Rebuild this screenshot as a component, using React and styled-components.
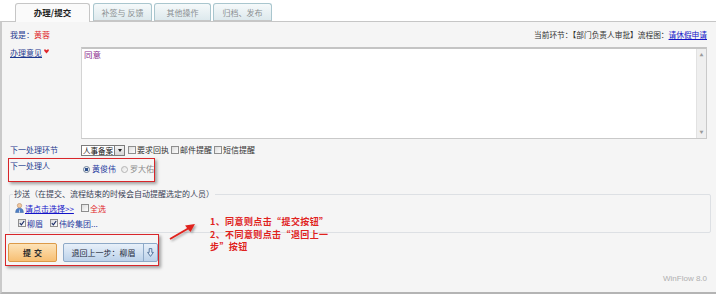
import React from "react";
import styled, { createGlobalStyle } from "styled-components";

const GlobalStyle = createGlobalStyle`
  html, body {
    margin: 0;
    padding: 0;
    background: #fff;
  }
  body {
    font-family: "Noto Sans CJK SC", "Liberation Sans", sans-serif;
    font-size: 8px;
    color: #333;
  }
  * {
    box-sizing: border-box;
  }
`;

const Page = styled.div`
  width: 716px;
  height: 294px;
  overflow: hidden;
`;

const TabBar = styled.div`
  display: flex;
  align-items: flex-end;
  height: 21px;
  padding-left: 15px;
  position: relative;
  z-index: 1;
`;

const Tab = styled.div`
  width: ${(p) => p.$w}px;
  margin-right: ${(p) => p.$gap || 0}px;
  height: ${(p) => (p.$active ? 19 : 18)}px;
  margin-bottom: ${(p) => (p.$active ? -1 : 0)}px;
  display: flex;
  align-items: center;
  justify-content: center;
  border: 1px solid ${(p) => (p.$active ? "#c6c6c6" : "#a9c6ce")};
  border-bottom: ${(p) => (p.$active ? "none" : "1px solid #c6c6c6")};
  border-radius: 3px 3px 0 0;
  background: ${(p) =>
    p.$active ? "#fafafa" : "linear-gradient(#f5f9fa, #dde9ed)"};
  color: ${(p) => (p.$active ? "#222" : "#8a8f92")};
  font-size: ${(p) => (p.$active ? 8.5 : 8)}px;
  font-weight: ${(p) => (p.$active ? 700 : 400)};
  padding-bottom: ${(p) => (p.$active ? 2 : 0)}px;
`;

const Panel = styled.div`
  height: 273px;
  border-top: 1px solid #c6c6c6;
  border-left: 2px solid #cacaca;
  border-bottom: 2px solid #b4b4b4;
  background: #f5f5f5;
  display: flex;
  flex-direction: column;
`;

const Header = styled.div`
  display: flex;
  justify-content: space-between;
  padding: 7px 9px 0 8px;
  line-height: 12px;
`;

const Me = styled.span`
  color: #1f3a8f;
  b {
    font-weight: 400;
    color: #e0262a;
  }
`;

const Info = styled.span`
  color: #333;
  font-size: 7.7px;
`;

const Link = styled.a`
  color: ${(p) => p.$color || "#1414c8"};
  text-decoration: underline;
  cursor: pointer;
`;

const FormRow = styled.div`
  display: grid;
  grid-template-columns: 71px 1fr;
  margin: ${(p) => p.$top}px 9px 0 8px;
  height: ${(p) => p.$h}px;
  line-height: 12px;
`;

const Label = styled.span`
  color: #1f3a8f;
  white-space: nowrap;
`;

const Required = styled.svg`
  margin-left: 2px;
  vertical-align: 2px;
`;

const TextBox = styled.div`
  display: flex;
  background: #fff;
  border: 1px solid #c9c9c9;
  border-top: 2px solid #c4c4c4;
  border-left-color: #d4d4d4;
`;

const TextContent = styled.div`
  flex: 1;
  padding: 0 2px;
  color: #8b2c8c;
  font-size: 8.5px;
  line-height: 11px;
`;

const ScrollTrack = styled.div`
  width: 10px;
  background: #efefef;
  border-left: 1px solid #e2e2e2;
  display: flex;
  flex-direction: column;
  justify-content: space-between;
  align-items: center;
  padding: 4px 0 3px;
  color: #9a9a9a;
  font-size: 4px;
  line-height: 5px;
`;

const Controls = styled.div`
  display: flex;
  align-items: center;
  height: 12px;
`;

const Select = styled.div`
  display: flex;
  align-items: stretch;
  height: 11px;
  width: 44px;
  border: 1px solid #7c7c7c;
  background: #fff;
  margin-right: 3px;
  color: #111;
  line-height: 9px;
  span {
    flex: 1;
    padding-left: 1px;
    font-size: 7.5px;
    white-space: nowrap;
    overflow: hidden;
  }
`;

const SelectBtn = styled.div`
  width: 10px;
  flex: none;
  border-left: 1px solid #7c7c7c;
  background: linear-gradient(#f4f4f4, #d6d6d6);
  display: flex;
  align-items: center;
  justify-content: center;
  &::after {
    content: "";
    border: 2.5px solid transparent;
    border-top: 3px solid #222;
    margin-top: 3px;
  }
`;

const Option = styled.label`
  display: inline-flex;
  align-items: center;
  margin-right: ${(p) => p.$gap ?? 2}px;
  color: ${(p) => p.$color || "#333"};
  white-space: nowrap;
`;

const Box = styled.span`
  width: 8px;
  height: 8px;
  border: 1px solid #8e8e8e;
  background: linear-gradient(135deg, #dcdcdc, #fdfdfd);
  margin-right: 1px;
  display: inline-flex;
  align-items: center;
  justify-content: center;
`;

const Radio = styled.span`
  width: 7px;
  height: 7px;
  border-radius: 50%;
  border: 1px solid ${(p) => (p.$on ? "#6f7f95" : "#b4b4b4")};
  background: ${(p) =>
    p.$on
      ? "radial-gradient(circle, #2c4f8c 0 1.5px, #e9eef5 2px)"
      : "linear-gradient(135deg, #e2e2e2, #fbfbfb)"};
  margin-right: 2px;
`;

const Callout = styled.div`
  border: 1px solid #d8262a;
  box-shadow: 2px 2px 3px rgba(0, 0, 0, 0.35);
  margin: ${(p) => p.$m};
  width: ${(p) => p.$w}px;
  height: ${(p) => p.$h}px;
`;

const HandlerRow = styled.div`
  display: grid;
  grid-template-columns: 73px 1fr;
  padding: 1px 0 0 1px;
  line-height: 12px;
`;

const Radios = styled.div`
  display: flex;
  align-items: center;
  padding-top: 3px;
`;

const CopySet = styled.fieldset`
  margin: 7px 5px 0 7px;
  padding: 0 5px 3px 5px;
  border: 1px solid #dde0e4;
  border-radius: 2px;
  min-width: 0;
`;

const Legend = styled.legend`
  padding: 0 1px;
  margin-left: -2px;
  color: #3a4256;
  line-height: 10px;
`;

const CopyRow = styled.div`
  display: flex;
  align-items: center;
  height: 12px;
  margin-top: 3px;
  padding-left: ${(p) => p.$pl || 0}px;
`;

const ActionRow = styled.div`
  position: relative;
  margin-top: 1px;
  padding-left: 3px;
`;

const Buttons = styled.div`
  display: flex;
  gap: 6px;
  padding: 8px 0 0 2px;
`;

const SubmitBtn = styled.button`
  width: 49px;
  height: 19px;
  border: 1px solid #dc9a48;
  border-radius: 2px;
  background: linear-gradient(#fde3b8, #f7bf73);
  font-family: inherit;
  font-size: 8px;
  font-weight: 700;
  color: #2c2c2c;
  letter-spacing: 3px;
  padding: 0 0 0 3px;
`;

const BackGroup = styled.div`
  display: flex;
  height: 19px;
  border: 1px solid #8ea9c7;
  border-radius: 2px;
  background: linear-gradient(#e8f0f9, #bcd2ea);
`;

const BackBtn = styled.button`
  width: 79px;
  border: none;
  background: none;
  font-family: inherit;
  font-size: 8px;
  color: #1e2a3c;
  padding: 0;
`;

const DropBtn = styled.button`
  width: 14px;
  border: none;
  border-left: 1px solid #8ea9c7;
  background: none;
  padding: 0;
  display: flex;
  align-items: center;
  justify-content: center;
`;

const Note = styled.div`
  position: absolute;
  left: 164px;
  top: -18px;
  display: flex;
  align-items: flex-start;
`;

const NoteText = styled.div`
  margin-left: 10px;
  color: #e0221d;
  font-weight: 700;
  font-size: 9px;
  letter-spacing: 0.4px;
  line-height: 12.5px;
  white-space: nowrap;
`;

const Footer = styled.div`
  margin-top: auto;
  padding: 0 9px 8px 0;
  text-align: right;
  font-family: "Liberation Sans", Arial, sans-serif;
  font-size: 8px;
  line-height: 10px;
  color: #b0b0b0;
`;

const Check = ({ on }) => (
  <Box>
    {on && (
      <svg width="6" height="6" viewBox="0 0 6 6">
        <path d="M0.8 3.2 L2.4 4.8 L5.2 1" fill="none" stroke="#1d2f6a" strokeWidth="1.2" />
      </svg>
    )}
  </Box>
);

const UserIcon = () => (
  <svg width="9" height="10" viewBox="0 0 9 10" style={{ marginRight: 1 }}>
    <circle cx="4.5" cy="2.6" r="2.2" fill="#f1c9a0" stroke="#b07a50" strokeWidth="0.5" />
    <path d="M0.6 9.6 C0.8 6 2.4 5.2 4.5 5.2 C6.6 5.2 8.2 6 8.4 9.6 Z" fill="#4f7fc4" stroke="#2e5a9a" strokeWidth="0.5" />
    <path d="M4.5 5.4 L4 9.4 L5 9.4 Z" fill="#fff" />
  </svg>
);

export default function App() {
  return (
    <Page>
      <GlobalStyle />
      <TabBar>
        <Tab $active $w={75} $gap={3}>办理/提交</Tab>
        <Tab $w={59} $gap={2}>补签与 反馈</Tab>
        <Tab $w={57} $gap={2}>其他操作</Tab>
        <Tab $w={59}>归档、发布</Tab>
      </TabBar>
      <Panel>
        <Header>
          <Me>
            我是：<b>黄蓉</b>
          </Me>
          <Info>
            当前环节：【部门负责人审批】流程图：<Link>请休假申请</Link>
          </Info>
        </Header>

        <FormRow $top={6} $h={92}>
          <Label>
            <Link $color="#1f3a8f">办理意见</Link>
            <Required width="5" height="5" viewBox="0 0 5 5">
              <path d="M2.5 4.6 L0.3 2 C-0.2 1 0.6 0 1.4 0.4 L2.5 1.2 L3.6 0.4 C4.4 0 5.2 1 4.7 2 Z" fill="#e0262a" />
            </Required>
          </Label>
          <TextBox>
            <TextContent>同意</TextContent>
            <ScrollTrack>
              <span>▲</span>
              <span>▼</span>
            </ScrollTrack>
          </TextBox>
        </FormRow>

        <FormRow $top={5} $h={12}>
          <Label>下一处理环节</Label>
          <Controls>
            <Select>
              <span>人事备案</span>
              <SelectBtn />
            </Select>
            <Option>
              <Check />
              要求回执
            </Option>
            <Option>
              <Check />
              邮件提醒
            </Option>
            <Option>
              <Check />
              短信提醒
            </Option>
          </Controls>
        </FormRow>

        <Callout $m="2px 0 0 6px" $w={147} $h={24}>
          <HandlerRow>
            <Label>下一处理人</Label>
            <Radios>
              <Option $color="#1f3a9f" $gap={5}>
                <Radio $on />
                黄俊伟
              </Option>
              <Option $color="#8c8c8c">
                <Radio />
                罗大佑
              </Option>
            </Radios>
          </HandlerRow>
        </Callout>

        <CopySet>
          <Legend>抄送（在提交、流程结束的时候会自动提醒选定的人员）</Legend>
          <CopyRow>
            <UserIcon />
            <Link>请点击选择&gt;&gt;</Link>
            <Option $color="#e0262a" style={{ marginLeft: 7 }}>
              <Check />
              全选
            </Option>
          </CopyRow>
          <CopyRow $pl={3}>
            <Option $color="#1f3a9f" $gap={7}>
              <Check on />
              柳眉
            </Option>
            <Option $color="#1f3a9f">
              <Check on />
              伟岭集团...
            </Option>
          </CopyRow>
        </CopySet>

        <ActionRow>
          <Callout $m="0" $w={154} $h={32}>
            <Buttons>
              <SubmitBtn>提交</SubmitBtn>
              <BackGroup>
                <BackBtn>退回上一步：柳眉</BackBtn>
                <DropBtn>
                  <svg width="7" height="9" viewBox="0 0 7 9">
                    <path
                      d="M2.2 0.6 H4.8 V4.4 H6.4 L3.5 8.4 L0.6 4.4 H2.2 Z"
                      fill="#dce8f5"
                      stroke="#4f6f99"
                      strokeWidth="0.9"
                    />
                  </svg>
                </DropBtn>
              </BackGroup>
            </Buttons>
          </Callout>
          <Note>
            <svg width="34" height="26" viewBox="0 0 34 26" style={{ marginTop: 1 }}>
              <defs>
                <filter id="sh" x="-20%" y="-20%" width="160%" height="160%">
                  <feDropShadow dx="1.5" dy="1.5" stdDeviation="0.8" floodColor="#000" floodOpacity="0.35" />
                </filter>
              </defs>
              <g filter="url(#sh)">
                <path d="M4 22 L23 11" stroke="#e0221d" strokeWidth="2" fill="none" />
                <path d="M29 7 L19 8.5 L24.5 15 Z" fill="#e0221d" />
              </g>
            </svg>
            <NoteText>
              1、同意则点击“提交按钮”
              <br />
              2、不同意则点击“退回上一
              <br />
              步”按钮
            </NoteText>
          </Note>
        </ActionRow>

        <Footer>WinFlow 8.0</Footer>
      </Panel>
    </Page>
  );
}
